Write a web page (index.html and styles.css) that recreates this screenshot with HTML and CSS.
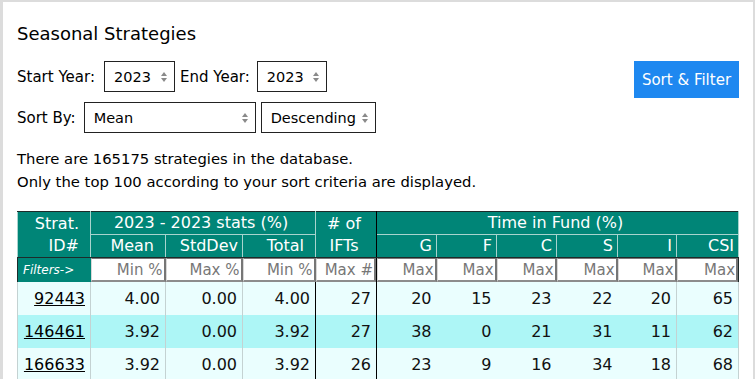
FILE: index.html
```html
<!DOCTYPE html>
<html lang="en">
  <head>
    <meta charset="UTF-8" />
    <meta name="viewport" content="width=device-width, initial-scale=1.0" />
    <title>Seasonal Strategies</title>
    <link rel="stylesheet" href="styles.css">
  </head>
  <body>
    <div class="page">
      <h2 class="page-title">Seasonal Strategies</h2>

      <form class="controls">
        <div class="control-rows">
          <div class="control-row">
            <label class="control-label" for="start-year">Start Year:</label>
            <span class="select-wrap">
              <select id="start-year" class="year-select">
                <option>2023</option>
              </select>
            </span>
            <label class="control-label label-tight" for="end-year">End Year:</label>
            <span class="select-wrap">
              <select id="end-year" class="year-select year-select-end">
                <option>2023</option>
              </select>
            </span>
          </div>
          <div class="control-row">
            <label class="control-label label-wide" for="sort-by">Sort By:</label>
            <span class="select-wrap">
              <select id="sort-by" class="sort-select">
                <option>Mean</option>
              </select>
            </span>
            <span class="select-wrap">
              <select id="sort-order" class="order-select">
                <option>Descending</option>
              </select>
            </span>
          </div>
        </div>
        <button type="button" class="sort-button">Sort &amp; Filter</button>
      </form>

      <p class="summary">
        There are 165175 strategies in the database.<br />
        Only the top 100 according to your sort criteria are displayed.
      </p>

      <table class="strategy-table">
        <colgroup>
          <col style="width: 73px" />
          <col style="width: 75px" />
          <col style="width: 77px" />
          <col style="width: 73px" />
          <col style="width: 61px" />
          <col style="width: 60px" />
          <col style="width: 60px" />
          <col style="width: 60px" />
          <col style="width: 61px" />
          <col style="width: 59px" />
          <col style="width: 62px" />
        </colgroup>
        <thead>
          <tr>
            <th rowspan="2" class="head-id">Strat.<br />ID#</th>
            <th colspan="3" class="head-group">2023 - 2023 stats (%)</th>
            <th rowspan="2" class="head-ifts">#&nbsp;of<br />IFTs</th>
            <th colspan="6" class="head-group">Time in Fund (%)</th>
          </tr>
          <tr>
            <th class="head-sub pad-wide">Mean</th>
            <th class="head-sub">StdDev</th>
            <th class="head-sub pad-wide">Total</th>
            <th class="head-sub">G</th>
            <th class="head-sub">F</th>
            <th class="head-sub">C</th>
            <th class="head-sub">S</th>
            <th class="head-sub">I</th>
            <th class="head-sub">CSI</th>
          </tr>
        </thead>
        <tbody>
          <tr class="filter-row">
            <td class="filter-label">Filters-&gt;</td>
            <td><input class="filter-input" placeholder="Min %" /></td>
            <td><input class="filter-input" placeholder="Max %" /></td>
            <td><input class="filter-input" placeholder="Min %" /></td>
            <td class="sep-dark"><input class="filter-input" placeholder="Max #" /></td>
            <td><input class="filter-input" placeholder="Max" /></td>
            <td><input class="filter-input" placeholder="Max" /></td>
            <td><input class="filter-input" placeholder="Max" /></td>
            <td><input class="filter-input" placeholder="Max" /></td>
            <td><input class="filter-input" placeholder="Max" /></td>
            <td><input class="filter-input" placeholder="Max" /></td>
          </tr>
          <tr class="data-row">
            <td class="cell-line"><a href="#" class="strat-link">92443</a></td>
            <td class="cell-line">4.00</td>
            <td class="cell-line">0.00</td>
            <td class="sep-dark">4.00</td>
            <td class="sep-dark">27</td>
            <td>20</td>
            <td>15</td>
            <td>23</td>
            <td>22</td>
            <td class="cell-line">20</td>
            <td class="cell-line">65</td>
          </tr>
          <tr class="data-row alt">
            <td class="cell-line"><a href="#" class="strat-link">146461</a></td>
            <td class="cell-line">3.92</td>
            <td class="cell-line">0.00</td>
            <td class="sep-dark">3.92</td>
            <td class="sep-dark">27</td>
            <td>38</td>
            <td>0</td>
            <td>21</td>
            <td>31</td>
            <td class="cell-line">11</td>
            <td class="cell-line">62</td>
          </tr>
          <tr class="data-row">
            <td class="cell-line"><a href="#" class="strat-link">166633</a></td>
            <td class="cell-line">3.92</td>
            <td class="cell-line">0.00</td>
            <td class="sep-dark">3.92</td>
            <td class="sep-dark">26</td>
            <td>23</td>
            <td>9</td>
            <td>16</td>
            <td>34</td>
            <td class="cell-line">18</td>
            <td class="cell-line">68</td>
          </tr>
        </tbody>
      </table>
    </div>
  </body>
</html>
```

FILE: styles.css
```css
:root {
  --clr-teal: #008577;
  --clr-head-line: #a8d4ce;
  --clr-row: #eafefe;
  --clr-row-alt: #adf6f6;
  --clr-cell-line: #c4d2d2;
}

* {
  box-sizing: border-box;
}

body {
  margin: 0;
  background: #fff;
  color: #000;
  font-family: "DejaVu Sans", Verdana, sans-serif;
  font-size: 15px;
}

.page {
  margin-right: 1px;
  min-height: 379px;
  border: solid #dcdcdc;
  border-width: 2px 2px 0 3px;
  padding: 0 14px;
}

.page-title {
  margin: 21px 0 0;
  font-size: 18px;
  font-weight: normal;
  line-height: 22px;
}

.controls {
  display: flex;
  justify-content: space-between;
  align-items: flex-start;
  margin-top: 16px;
}

.control-rows {
  display: flex;
  flex-direction: column;
  gap: 10px;
}

.control-row {
  display: flex;
  align-items: center;
}

.control-label {
  margin-right: 9px;
}

.label-tight {
  margin-right: 7px;
}

.label-wide {
  margin-right: 8px;
}

.select-wrap {
  position: relative;
  display: block;
  margin-right: 5px;
}

/* little up/down arrows of the select */
.select-wrap::before,
.select-wrap::after {
  content: "";
  position: absolute;
  right: 8px;
  border-left: 3px solid transparent;
  border-right: 3px solid transparent;
  pointer-events: none;
}

.select-wrap::before {
  top: 11px;
  border-bottom: 4px solid #8a8a8a;
}

.select-wrap::after {
  top: 17px;
  border-top: 4px solid #8a8a8a;
}

.select-wrap select {
  appearance: none;
  -webkit-appearance: none;
  display: block;
  height: 31px;
  margin: 0;
  padding: 0 0 0 9px;
  border: 1px solid #222;
  border-radius: 0;
  background: #fff;
  color: #000;
  font: inherit;
  font-size: 14.5px;
}

.year-select {
  width: 71px;
}

.year-select-end {
  width: 70px;
}

.sort-select {
  width: 172px;
}

.order-select {
  width: 115px;
}

.sort-button {
  width: 105px;
  height: 37px;
  padding: 0;
  border: none;
  background: #1e88f0;
  color: #fff;
  font: inherit;
}

.summary {
  margin: 14px 0 0;
  font-size: 14.8px;
  line-height: 23px;
}

.strategy-table {
  margin-top: 18px;
  width: 721px;
  table-layout: fixed;
  border-collapse: collapse;
  border: 1px solid #1d2b2a;
  font-size: 16px;
}

.strategy-table th {
  padding: 0 4px 0 0;
  border: 1px solid var(--clr-head-line);
  background: var(--clr-teal);
  color: #fff;
  font-weight: normal;
  line-height: 22px;
  text-align: right;
}

.strategy-table thead tr:first-child th {
  border-top-color: #1d2b2a;
}

.head-id {
  padding-right: 11px !important;
  border-bottom-color: #1d2b2a !important;
}

.head-group {
  text-align: center !important;
}

.head-ifts {
  text-align: center !important;
  border-right-color: #000 !important;
  border-bottom-color: #1d2b2a !important;
}

.head-sub {
  border-bottom-color: #1d2b2a !important;
}

.pad-wide {
  padding-right: 11px !important;
}

.filter-row td {
  height: 24px;
  padding: 0;
  border: 0;
}

.filter-row .sep-dark {
  border-right: 1px solid #000;
}

.filter-label {
  padding-left: 5px !important;
  background: var(--clr-teal);
  color: #fff;
  font-size: 12px;
  font-style: italic;
}

.filter-input {
  display: block;
  width: 100%;
  height: 24px;
  margin: 0;
  padding: 0 1px 0 0;
  border-style: solid;
  border-width: 1px 2px 2px 1px;
  border-color: #767676 #767676 #8c8c8c #d8d8d8;
  background: #fff;
  font: inherit;
  font-size: 15px;
  text-align: right;
}

.filter-input::placeholder {
  color: #777;
}

.data-row td {
  height: 33px;
  padding: 0 5px 0 0;
  background: var(--clr-row);
  text-align: right;
  color: #111;
}

.data-row.alt td {
  background: var(--clr-row-alt);
}

.data-row .cell-line {
  border-right: 1px solid var(--clr-cell-line);
}

.data-row td:first-child {
  border-left: 1px solid var(--clr-cell-line);
}

.data-row .sep-dark {
  border-right: 1px solid #000;
}

.strat-link {
  color: #000;
  text-decoration: underline;
}
```
